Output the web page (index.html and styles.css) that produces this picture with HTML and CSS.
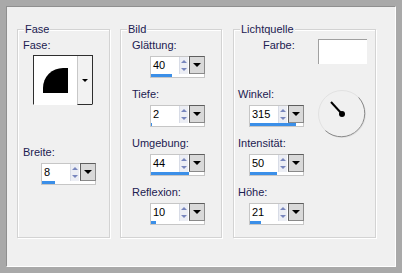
FILE: index.html
```html
<!DOCTYPE html>
<html lang="de">
<head>
    <meta charset="UTF-8">
    <meta name="viewport" content="width=device-width, initial-scale=1.0">
    <title>Fase</title>

    <!-- CSS Styles -->
    <link rel="stylesheet" href="styles.css">
</head>
<body>

    <div class="frame">
        <div class="panel">

            <!-- Fase -->
            <section class="group group-fase">
                <div class="group-title">Fase</div>
                <div class="group-body">
                    <div class="label">Fase:</div>
                    <div class="preview">
                        <div class="preview-shape"><div class="bevel"></div></div>
                        <div class="preview-drop"><span class="arrow arrow-small"></span></div>
                    </div>
                    <div class="label label-breite">Breite:</div>
                    <div class="spin">
                        <div class="spin-row">
                            <span class="spin-value">8</span>
                            <span class="spin-arrows"><span class="up"></span><span class="down"></span></span>
                            <span class="spin-drop"><span class="arrow"></span></span>
                        </div>
                        <div class="spin-bar"><div class="spin-fill" style="width: 24%"></div></div>
                    </div>
                </div>
            </section>

            <!-- Bild -->
            <section class="group group-bild">
                <div class="group-title">Bild</div>
                <div class="group-body bild-body">
                    <div class="field">
                        <div class="label">Glättung:</div>
                        <div class="spin">
                            <div class="spin-row">
                                <span class="spin-value">40</span>
                                <span class="spin-arrows"><span class="up"></span><span class="down"></span></span>
                                <span class="spin-drop"><span class="arrow"></span></span>
                            </div>
                            <div class="spin-bar"><div class="spin-fill" style="width: 40%"></div></div>
                        </div>
                    </div>
                    <div class="field">
                        <div class="label">Tiefe:</div>
                        <div class="spin">
                            <div class="spin-row">
                                <span class="spin-value">2</span>
                                <span class="spin-arrows"><span class="up"></span><span class="down"></span></span>
                                <span class="spin-drop"><span class="arrow"></span></span>
                            </div>
                            <div class="spin-bar"><div class="spin-fill" style="width: 1%"></div></div>
                        </div>
                    </div>
                    <div class="field">
                        <div class="label">Umgebung:</div>
                        <div class="spin">
                            <div class="spin-row">
                                <span class="spin-value">44</span>
                                <span class="spin-arrows"><span class="up"></span><span class="down"></span></span>
                                <span class="spin-drop"><span class="arrow"></span></span>
                            </div>
                            <div class="spin-bar"><div class="spin-fill" style="width: 72%"></div></div>
                        </div>
                    </div>
                    <div class="field">
                        <div class="label">Reflexion:</div>
                        <div class="spin">
                            <div class="spin-row">
                                <span class="spin-value">10</span>
                                <span class="spin-arrows"><span class="up"></span><span class="down"></span></span>
                                <span class="spin-drop"><span class="arrow"></span></span>
                            </div>
                            <div class="spin-bar"><div class="spin-fill" style="width: 10%"></div></div>
                        </div>
                    </div>
                </div>
            </section>

            <!-- Lichtquelle -->
            <section class="group group-light">
                <div class="group-title">Lichtquelle</div>
                <div class="group-body light-body">
                    <div class="color-row">
                        <div class="label">Farbe:</div>
                        <div class="swatch"></div>
                    </div>
                    <div class="field">
                        <div class="label">Winkel:</div>
                        <div class="spin">
                            <div class="spin-row">
                                <span class="spin-value">315</span>
                                <span class="spin-arrows"><span class="up"></span><span class="down"></span></span>
                                <span class="spin-drop"><span class="arrow"></span></span>
                            </div>
                            <div class="spin-bar"><div class="spin-fill" style="width: 87.5%"></div></div>
                        </div>
                    </div>
                    <svg class="dial" width="50" height="50" viewBox="0 0 50 50">
                        <circle cx="25" cy="25" r="23.5" fill="none" stroke="#e2e2e2" stroke-width="1"/>
                        <path d="M41.6 8.4 A23.5 23.5 0 0 1 8.4 41.6" fill="none" stroke="#8a8a8a" stroke-width="1"/>
                        <line x1="25" y1="25" x2="14" y2="13" stroke="#000" stroke-width="2"/>
                        <circle cx="25" cy="25" r="3" fill="#000"/>
                    </svg>
                    <div class="field">
                        <div class="label">Intensität:</div>
                        <div class="spin">
                            <div class="spin-row">
                                <span class="spin-value">50</span>
                                <span class="spin-arrows"><span class="up"></span><span class="down"></span></span>
                                <span class="spin-drop"><span class="arrow"></span></span>
                            </div>
                            <div class="spin-bar"><div class="spin-fill" style="width: 50%"></div></div>
                        </div>
                    </div>
                    <div class="field">
                        <div class="label">Höhe:</div>
                        <div class="spin">
                            <div class="spin-row">
                                <span class="spin-value">21</span>
                                <span class="spin-arrows"><span class="up"></span><span class="down"></span></span>
                                <span class="spin-drop"><span class="arrow"></span></span>
                            </div>
                            <div class="spin-bar"><div class="spin-fill" style="width: 21%"></div></div>
                        </div>
                    </div>
                </div>
            </section>

        </div>
    </div>

</body>
</html>
```

FILE: styles.css
```css
/* General */
* {
    box-sizing: border-box;
}

body {
    margin: 0;
    font-family: "Liberation Sans", Arial, sans-serif;
    font-size: 11px;
    color: #1c2050;
}

/* Outer frame */
.frame {
    width: 402px;
    height: 273px;
    border: 6px solid #a9a9a9;
}

.panel {
    height: 100%;
    display: flex;
    gap: 10px;
    padding: 22px 0 28px 10px;
    background-color: #f0f0f0;
    border: 1px solid;
    border-color: #8f8f8f #fff #fff #8f8f8f;
}

/* Group boxes */
.group {
    display: flex;
    flex-direction: column;
    border: 1px solid #d3d3d3;
    box-shadow: inset 1px 1px 0 #fff, 1px 1px 0 #fff;
}

.group-fase {
    width: 93px;
}

.group-bild {
    width: 102px;
}

.group-light {
    width: 143px;
    margin-left: 1px;
}

.group-title {
    align-self: flex-start;
    margin: -7px 0 3px 6px;
    padding: 0 1px;
    line-height: 13px;
    background-color: #f0f0f0;
}

.group-fase .group-body {
    padding-left: 5px;
}

.label {
    line-height: 13px;
}

/* Fase preview */
.preview {
    width: 60px;
    height: 50px;
    margin: 3px 0 0 10px;
    display: flex;
    background-color: #fff;
    border: 1px solid #2e2e2e;
    border-bottom-color: #fff;
}

.preview-shape {
    flex: 1;
    display: flex;
    align-items: center;
    justify-content: center;
}

.bevel {
    width: 25px;
    height: 25px;
    background-color: #000;
    border-top-left-radius: 20px;
}

.preview-drop {
    width: 15px;
    margin-bottom: -1px;
    display: flex;
    align-items: center;
    justify-content: center;
    background-color: #f2f2f2;
    border-left: 1px solid #c8c8c8;
    border-bottom: 1px solid #2e2e2e;
}

.label-breite {
    margin-top: 41px;
}

/* Spin controls */
.spin {
    width: 55px;
    height: 22px;
    margin: 4px 0 0 18px;
    display: flex;
    flex-direction: column;
    background-color: #fff;
    border: 1px solid #c6c6c6;
}

.spin-row {
    height: 17px;
    display: flex;
}

.spin-value {
    flex: 1;
    padding-left: 2px;
    line-height: 17px;
    color: #000;
}

.spin-arrows {
    width: 9px;
    display: flex;
    flex-direction: column;
    background-color: #eceef4;
    border-left: 1px solid #d8dce6;
}

.up, .down {
    flex: 1;
    display: flex;
    align-items: center;
    justify-content: center;
}

.up::before {
    content: "";
    border-left: 3px solid transparent;
    border-right: 3px solid transparent;
    border-bottom: 3px solid #7886bd;
}

.down::before {
    content: "";
    border-left: 3px solid transparent;
    border-right: 3px solid transparent;
    border-top: 3px solid #7886bd;
}

.spin-drop {
    width: 16px;
    height: 18px;
    margin: -1px -1px 0 1px;
    display: flex;
    align-items: center;
    justify-content: center;
    background-color: #d9d9d9;
    border: 1px solid;
    border-color: #5e5e5e #8a8a8a #8a8a8a #5e5e5e;
}

.arrow {
    border-left: 4px solid transparent;
    border-right: 4px solid transparent;
    border-top: 4px solid #000;
}

.arrow-small {
    border-left-width: 3px;
    border-right-width: 3px;
    border-top-width: 3px;
}

.spin-bar {
    flex: 1;
}

.spin-fill {
    height: 100%;
    background-color: #3b8fe8;
}

/* Bild */
.bild-body {
    display: flex;
    flex-direction: column;
    gap: 10px;
    padding-left: 11px;
}

/* Lichtquelle */
.light-body {
    display: grid;
    grid-template-columns: 66px 50px;
    column-gap: 13px;
    row-gap: 10px;
    padding-left: 4px;
}

.group-light .spin {
    margin-left: 11px;
}

.color-row {
    grid-column: 1 / -1;
    display: flex;
    gap: 23px;
    padding-left: 25px;
    margin-bottom: 14px;
}

.swatch {
    width: 50px;
    height: 25px;
    background-color: #fff;
    border-top: 1px solid #a0a0a0;
    border-left: 1px solid #a0a0a0;
}

.dial {
    grid-column: 2;
    grid-row: 2 / span 2;
    margin-top: 1px;
}
```
